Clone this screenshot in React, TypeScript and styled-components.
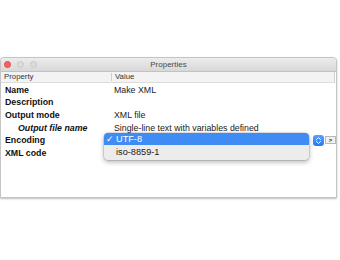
import styled, { createGlobalStyle } from "styled-components";

const GlobalStyle = createGlobalStyle`
	html, body {
		margin: 0;
		padding: 0;
		background: #ffffff;
	}
	body {
		font-family: "Liberation Sans", Arial, sans-serif;
	}
`;

type RowProps = {
	label: string;
	value?: string;
	sub?: boolean;
	children?: React.ReactNode;
};

const rows: RowProps[] = [
	{ label: "Name", value: "Make XML" },
	{ label: "Description" },
	{ label: "Output mode", value: "XML file" },
	{ label: "Output file name", value: "Single-line text with variables defined", sub: true },
];

function Row({ label, value, sub, children }: RowProps) {
	return (
		<RowBox>
			<LabelCell $sub={sub}>{label}</LabelCell>
			<ValueCell>
				{value}
				{children}
			</ValueCell>
		</RowBox>
	);
}

function Stepper() {
	return (
		<StepperButton>
			<svg width="7" height="9" viewBox="0 0 7 9">
				<path d="M1.5 3.5 L3.5 1.5 L5.5 3.5 M1.5 5.5 L3.5 7.5 L5.5 5.5" fill="none" stroke="#fff" strokeWidth="1" strokeLinecap="round" />
			</svg>
		</StepperButton>
	);
}

export default function App() {
	return (
		<>
			<GlobalStyle />
			<Page>
				<Window>
					<TitleBar>
						<Lights>
							<Light $color="#fc605c" $border="#de4a45" />
							<Light $color="#dcdcdc" $border="#c8c8c8" />
							<Light $color="#dcdcdc" $border="#c8c8c8" />
						</Lights>
						<Title>Properties</Title>
					</TitleBar>
					<Header>
						<HeadCell>Property</HeadCell>
						<HeadCell $divider>Value</HeadCell>
					</Header>
					<Body>
						{rows.map((r) => (
							<Row key={r.label} {...r} />
						))}
						<Row label="Encoding">
							<Menu>
								<MenuItem $selected>
									<Check>✓</Check>UTF-8
								</MenuItem>
								<MenuItem>iso-8859-1</MenuItem>
							</Menu>
							<Controls>
								<Stepper />
								<MoreButton>&gt;</MoreButton>
							</Controls>
						</Row>
						<Row label="XML code" />
					</Body>
				</Window>
			</Page>
		</>
	);
}

const Page = styled.div`
	padding-top: 57px;
	width: 340px;
	height: 260px;
	box-sizing: border-box;
`;

const Window = styled.div`
	width: 337px;
	height: 141px;
	box-sizing: border-box;
	border: 1px solid #c4c4c4;
	border-radius: 4px 4px 0 0;
	box-shadow: 0 1px 2px rgba(0, 0, 0, 0.25);
	background: #fff;
	display: flex;
	flex-direction: column;
`;

const TitleBar = styled.div`
	height: 13px;
	position: relative;
	display: flex;
	align-items: center;
	justify-content: center;
	background: linear-gradient(#ececec, #d8d8d8);
	border-bottom: 1px solid #c2c2c2;
	border-radius: 4px 4px 0 0;
`;

const Lights = styled.div`
	position: absolute;
	left: 3px;
	top: 3px;
	display: flex;
	gap: 6px;
`;

const Light = styled.div<{ $color: string; $border: string }>`
	width: 7px;
	height: 7px;
	box-sizing: border-box;
	border-radius: 50%;
	background: ${(p) => p.$color};
	border: 0.5px solid ${(p) => p.$border};
`;

const Title = styled.div`
	font-size: 8px;
	color: #4a4a4a;
`;

const Header = styled.div`
	height: 10px;
	display: flex;
	background: #f3f3f3;
	border-bottom: 1px solid #dcdcdc;
	border-right: 1px solid #d0d0d0;
	margin-right: 1px;
`;

const HeadCell = styled.div<{ $divider?: boolean }>`
	font-size: 7.8px;
	color: #333;
	padding-left: 3px;
	width: ${(p) => (p.$divider ? "auto" : "107px")};
	flex: ${(p) => (p.$divider ? "1" : "none")};
	border-left: ${(p) => (p.$divider ? "1px solid #d0d0d0" : "none")};
	margin: 1px 0;
	line-height: 8px;
`;

const Body = styled.div`
	display: flex;
	flex-direction: column;
	padding-top: 0.5px;
`;

const RowBox = styled.div`
	height: 12.6px;
	display: flex;
	align-items: center;
	position: relative;
`;

const LabelCell = styled.div<{ $sub?: boolean }>`
	width: 109px;
	flex: none;
	box-sizing: border-box;
	padding-left: ${(p) => (p.$sub ? "17px" : "4px")};
	font-size: 8.8px;
	font-weight: bold;
	font-style: ${(p) => (p.$sub ? "italic" : "normal")};
	color: #111;
	white-space: nowrap;
`;

const ValueCell = styled.div`
	flex: 1;
	position: relative;
	height: 100%;
	display: flex;
	align-items: center;
	padding-left: 4px;
	font-size: 8.8px;
	color: #1a1a1a;
	white-space: nowrap;
`;

const Menu = styled.div`
	position: absolute;
	left: -6px;
	top: -1px;
	width: 205px;
	padding: 0 0 2px;
	background: #ececec;
	border-radius: 4px;
	box-shadow: 0 0 0 0.5px rgba(0, 0, 0, 0.2), 0 2px 5px rgba(0, 0, 0, 0.3);
	overflow: hidden;
	z-index: 2;
`;

const MenuItem = styled.div<{ $selected?: boolean }>`
	height: 12.5px;
	display: flex;
	align-items: center;
	padding-left: 12px;
	position: relative;
	font-size: 9.2px;
	color: ${(p) => (p.$selected ? "#fff" : "#1a1a1a")};
	background: ${(p) => (p.$selected ? "#3f8cf4" : "transparent")};
`;

const Check = styled.span`
	position: absolute;
	left: 2px;
	font-size: 9px;
`;

const Controls = styled.div`
	margin-left: auto;
	display: flex;
	align-items: center;
	gap: 1px;
	padding-right: 0;
`;

const StepperButton = styled.div`
	width: 11px;
	height: 11px;
	border-radius: 3px;
	background: linear-gradient(#5aa0f7, #2b78ee);
	display: flex;
	align-items: center;
	justify-content: center;
`;

const MoreButton = styled.div`
	width: 11px;
	height: 8px;
	box-sizing: border-box;
	border: 1px solid #b8b8b8;
	background: #f0f0f0;
	font-size: 6px;
	line-height: 6px;
	text-align: center;
	color: #222;
	font-weight: bold;
`;
